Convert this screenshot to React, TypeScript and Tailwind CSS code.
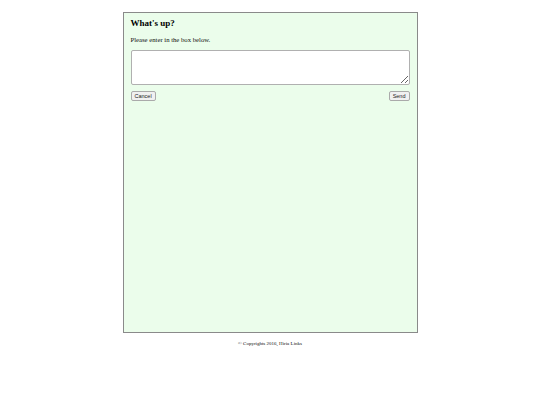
import React from 'react'

export default function App() {
  return (
    <div className="min-h-[405px] bg-white pt-[12px] font-['Liberation_Serif',serif] text-black">
      <div className="mx-auto flex h-[321px] w-[295px] flex-col border border-[#8a8a8a] bg-[#ebfdeb] px-[7px] pt-[4px]">
        <h1 className="text-[9px] font-bold leading-[12px]">What's up?</h1>
        <p className="mt-[6px] text-[6.7px] font-normal leading-[9px] text-[#111]">Please enter in the box below.</p>
        <textarea className="mt-[6px] h-[35px] w-full resize-y rounded-[2px] border border-[#b0b0b0] bg-white" />
        <div className="mt-[6px] flex items-center justify-between">
          <button className="h-[10px] rounded-[2px] border border-[#aaaaaa] bg-[#f0f0f0] px-[3px] font-['Liberation_Sans',sans-serif] text-[5.5px] leading-[8px] text-[#222]">
            Cancel
          </button>
          <button className="h-[10px] rounded-[2px] border border-[#aaaaaa] bg-[#f0f0f0] px-[3px] font-['Liberation_Sans',sans-serif] text-[5.5px] leading-[8px] text-[#222]">
            Send
          </button>
        </div>
      </div>
      <p className="mt-[7px] text-center text-[5px] font-normal leading-[7px] text-[#111]">© Copyrights 2016, Hiria Links</p>
    </div>
  )
}
